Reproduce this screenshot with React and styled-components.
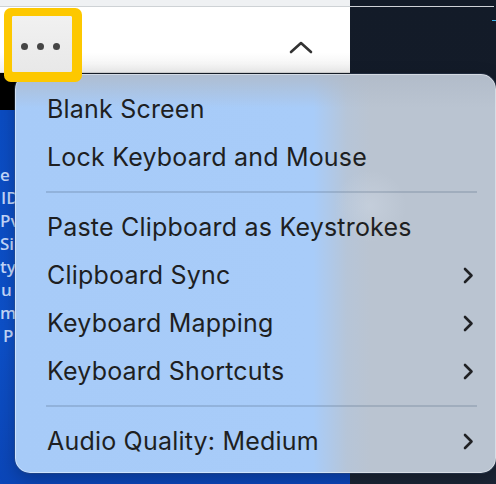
import React from "react";
import styled, { createGlobalStyle } from "styled-components";

const GlobalStyle = createGlobalStyle`
  html, body {
    margin: 0;
    padding: 0;
    background: #131b28;
  }
  * {
    box-sizing: border-box;
  }
`;

const Page = styled.div`
  position: relative;
  width: 496px;
  height: 484px;
  overflow: hidden;
  display: grid;
  grid-template-columns: 350px 1fr;
  font-family: Inter, "Noto Sans", sans-serif;
`;

const LeftColumn = styled.div`
  display: flex;
  flex-direction: column;
  background: #0c4dc2;
`;

const RightColumn = styled.div`
  display: flex;
  flex-direction: column;
  background: linear-gradient(180deg, #131b28 0%, #141c2b 80%, #1b2536 100%);
`;

const TopStrip = styled.div`
  height: 7px;
  flex-shrink: 0;
  background: ${(p) => (p.dark ? "transparent" : "#eff1f3")};
  border-bottom: 1px solid ${(p) => (p.dark ? "#cfd2d7" : "#ced2d5")};
  margin-right: ${(p) => (p.dark ? "2px" : "0")};
`;

const Toolbar = styled.div`
  height: 66px;
  flex-shrink: 0;
  display: flex;
  align-items: flex-start;
  justify-content: space-between;
  padding: 9px 37px 0 12px;
  background: linear-gradient(180deg, #ffffff 0%, #ffffff 70%, #efefef 100%);
  border-bottom: 1px solid #d4d4d4;
`;

const MoreButton = styled.button`
  position: relative;
  z-index: 3;
  width: 60px;
  height: 56px;
  border: none;
  border-radius: 2px;
  background: linear-gradient(180deg, #f1f1f1 0%, #e8e8e8 100%);
  box-shadow: 1px 1px 0 9px #fdc800;
  display: flex;
  align-items: center;
  justify-content: center;
  gap: 9px;
  padding: 4px 4px 0 0;
`;

const Dot = styled.span`
  width: 7px;
  height: 7px;
  border-radius: 50%;
  background: #454545;
`;

const Caret = styled.svg`
  margin-top: 24px;
  width: 24px;
  height: 14px;
`;

const BlackBand = styled.div`
  height: 37px;
  flex-shrink: 0;
  background: #000;
`;

const Desktop = styled.div`
  flex: 1;
  display: flex;
  flex-direction: column;
  padding-top: 53px;
  background: linear-gradient(180deg, #0b4cc2 0%, #0d50c8 60%, #0b46b8 100%);
`;

const DesktopLabel = styled.span`
  font-family: "Open Sans", "Noto Sans", sans-serif;
  font-size: 17px;
  font-weight: 600;
  line-height: 23px;
  color: #c4d8fc;
  white-space: nowrap;
  margin-left: ${(p) => p.shift || 0}px;
`;

const CyanDash = styled.div`
  align-self: flex-end;
  width: 4px;
  height: 1px;
  margin-top: 13px;
  background: #39b6e8;
`;

const Menu = styled.div`
  position: absolute;
  z-index: 2;
  left: 15px;
  top: 74px;
  width: 481px;
  height: 399px;
  border-radius: 15px;
  padding: 11px 19px 8px 31px;
  display: flex;
  flex-direction: column;
  background:
    radial-gradient(circle at 355px 132px, rgba(215, 224, 236, 0.35) 0, rgba(215, 224, 236, 0) 36px),
    linear-gradient(180deg, rgba(176, 186, 200, 0.85) 0px, rgba(176, 186, 200, 0) 34px),
    linear-gradient(90deg, #a7cbf8 0%, #a8ccf9 62%, #b6c5d8 69%, #bac4d1 74%, #bac4d1 100%);
  box-shadow:
    inset 0 0 0 1px rgba(255, 255, 255, 0.45),
    0 0 0 1px rgba(60, 80, 110, 0.35),
    0 6px 18px rgba(0, 0, 0, 0.25);
`;

const Item = styled.div`
  height: 48px;
  flex-shrink: 0;
  display: flex;
  align-items: center;
  justify-content: space-between;
  padding: 0 3px 0 1px;
  font-size: 25px;
  letter-spacing: 0.2px;
  color: #1e1f22;
`;

const Separator = styled.div`
  height: 2px;
  margin: 10px 0;
  flex-shrink: 0;
  background: rgba(70, 90, 120, 0.22);
`;

const Chevron = () => (
  <svg width="11" height="17" viewBox="0 0 11 17">
    <path
      d="M2 2 L8.5 8.5 L2 15"
      fill="none"
      stroke="#202124"
      strokeWidth="2.6"
      strokeLinecap="round"
      strokeLinejoin="round"
    />
  </svg>
);

const desktopLabels = [
  { text: "e", shift: 0 },
  { text: "ID", shift: 1 },
  { text: "Pv", shift: 0 },
  { text: "Si", shift: 0 },
  { text: "ty", shift: 0 },
  { text: "u", shift: 1 },
  { text: "m", shift: 0 },
  { text: "P", shift: 3 },
];

const menuGroups = [
  [
    { label: "Blank Screen" },
    { label: "Lock Keyboard and Mouse" },
  ],
  [
    { label: "Paste Clipboard as Keystrokes" },
    { label: "Clipboard Sync", submenu: true },
    { label: "Keyboard Mapping", submenu: true },
    { label: "Keyboard Shortcuts", submenu: true },
  ],
  [{ label: "Audio Quality: Medium", submenu: true }],
];

export default function App() {
  return (
    <Page>
      <GlobalStyle />
      <LeftColumn>
        <TopStrip />
        <Toolbar>
          <MoreButton aria-label="More">
            <Dot />
            <Dot />
            <Dot />
          </MoreButton>
          <Caret viewBox="0 0 24 14">
            <path
              d="M2 12 L12 3 L22 12"
              fill="none"
              stroke="#333"
              strokeWidth="2.6"
              strokeLinecap="round"
              strokeLinejoin="round"
            />
          </Caret>
        </Toolbar>
        <BlackBand />
        <Desktop>
          {desktopLabels.map((l, i) => (
            <DesktopLabel key={i} shift={l.shift}>
              {l.text}
            </DesktopLabel>
          ))}
        </Desktop>
      </LeftColumn>
      <RightColumn>
        <TopStrip dark />
        <CyanDash />
      </RightColumn>
      <Menu>
        {menuGroups.map((group, gi) => (
          <React.Fragment key={gi}>
            {gi > 0 && <Separator />}
            {group.map((item) => (
              <Item key={item.label}>
                <span>{item.label}</span>
                {item.submenu && <Chevron />}
              </Item>
            ))}
          </React.Fragment>
        ))}
      </Menu>
    </Page>
  );
}
